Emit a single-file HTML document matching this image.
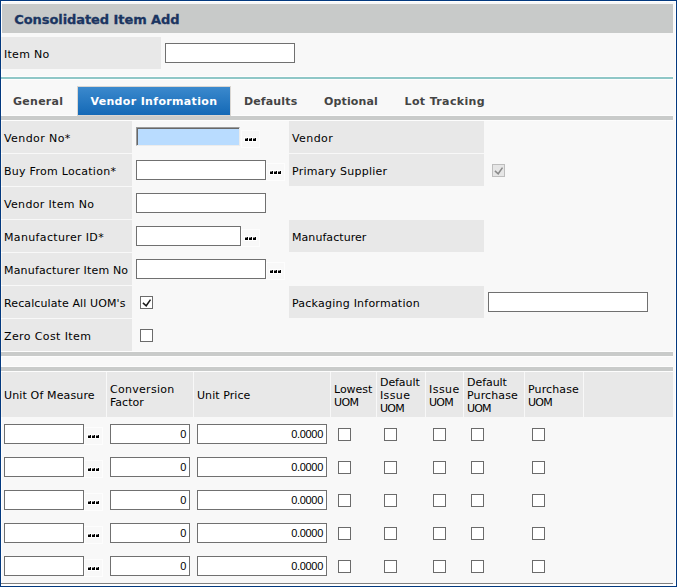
<!DOCTYPE html>
<html><head><meta charset="utf-8"><title>Consolidated Item Add</title>
<style>
html,body{margin:0;padding:0;}
body{width:677px;height:587px;overflow:hidden;background:#f8f8f8;position:relative;font-family:"DejaVu Sans","Liberation Sans",sans-serif;font-size:11px;color:#000;}
div,span{position:absolute;box-sizing:border-box;}
.frame{left:0;top:0;width:677px;height:587px;border:1px solid #03397f;}
.frame2{left:1px;top:1px;width:675px;height:585px;border:1px solid #fff;border-bottom-width:2px;}
.hdr{left:2px;top:4px;width:671px;height:29px;background:#c8cac9;}
.title{left:14.3px;top:12px;font-size:13px;font-weight:bold;color:#1b3561;white-space:nowrap;line-height:16px;-webkit-text-stroke:0.3px #1b3561;}
.lab{background:#e8e8e8;}
.ll{box-shadow:-1px 0 0 #f6f3ef;}
.t{white-space:nowrap;line-height:14px;}
.inp{background:#fff;border:1px solid #707070;}
.bar{background:#c9cbca;box-shadow:0 -1px 0 #fdfdfd,0 1px 0 #fdfdfd;}
.tab{font-weight:bold;color:#444;white-space:nowrap;line-height:14px;top:95px;}
.dots{width:19px;height:18px;border:1px solid #fdfdfd;}
.dots b{position:absolute;left:2px;top:6px;width:13px;height:5px;background:#fff;}
.dots i{position:absolute;top:7px;width:3px;height:3px;background:#000;}
.dots i:after{content:"";position:absolute;left:0;top:0;width:2px;height:1px;background:#8a8a8a;}
.cb{width:13px;height:13px;border:1px solid #6b6b6b;background:#fff;}
.num{text-align:right;line-height:18px;padding-right:3px;color:#000;font-family:"Liberation Sans",sans-serif;font-size:11px;letter-spacing:-0.3px;}
.hc{background:#e8e8e8;top:372px;height:45px;}
.hc span{left:3px;line-height:13px;white-space:nowrap;}
</style></head><body>
<div class="frame"></div><div class="frame2"></div>
<div class="hdr"></div><span class="title" id="title" style="letter-spacing:-0.08px">Consolidated Item Add</span>
<div class="lab ll" style="left:2px;top:37px;width:159px;height:32px"></div><span class="t" id="itemno" style="letter-spacing:0.28px;left:4px;top:48px">Item No</span>
<div class="inp" style="left:165px;top:43px;width:130px;height:20px"></div>
<div style="left:1px;top:77px;width:672px;height:2px;background:#8fc7c7;box-shadow:0 -1px 0 #fdfdfd,0 1px 0 #fdfdfd"></div>
<span class="tab" id="tab1" style="letter-spacing:0.27px;left:13px">General</span>
<div id="acttab" style="z-index:2;left:77px;top:86px;width:154px;height:30px;border:1px solid #d9d6d2;background:linear-gradient(#3b89cd,#1469b6)"></div>
<span class="tab" id="tab2" style="letter-spacing:0.34px;z-index:3;left:90.4px;color:#fff">Vendor Information</span>
<span class="tab" id="tab3" style="letter-spacing:0.14px;left:244px">Defaults</span>
<span class="tab" id="tab4" style="letter-spacing:0.14px;left:324px">Optional</span>
<span class="tab" id="tab5" style="letter-spacing:0.37px;left:404.5px">Lot Tracking</span>
<div class="bar" style="left:1px;top:116px;width:672px;height:4px"></div>

<div class="lab ll" style="left:2px;top:121px;width:130px;height:32px"></div><span class="t" id="l0" style="letter-spacing:0.41px;left:4px;top:132px">Vendor No*</span>
<div class="lab" style="left:289px;top:121px;width:195px;height:32px"></div><span class="t" id="r0" style="letter-spacing:0.42px;left:292px;top:132px">Vendor</span>
<div class="lab ll" style="left:2px;top:154px;width:130px;height:32px"></div><span class="t" id="l1" style="letter-spacing:0.27px;left:4px;top:165px">Buy From Location*</span>
<div class="lab" style="left:289px;top:154px;width:195px;height:32px"></div><span class="t" id="r1" style="letter-spacing:0.25px;left:292px;top:165px">Primary Supplier</span>
<div class="lab ll" style="left:2px;top:187px;width:130px;height:32px"></div><span class="t" id="l2" style="letter-spacing:0.33px;left:4px;top:198px">Vendor Item No</span>
<div class="lab ll" style="left:2px;top:220px;width:130px;height:32px"></div><span class="t" id="l3" style="letter-spacing:0.35px;left:4px;top:231px">Manufacturer ID*</span>
<div class="lab" style="left:289px;top:220px;width:195px;height:32px"></div><span class="t" id="r3" style="letter-spacing:0.06px;left:292px;top:231px">Manufacturer</span>
<div class="lab ll" style="left:2px;top:253px;width:130px;height:32px"></div><span class="t" id="l4" style="letter-spacing:0.18px;left:4px;top:264px">Manufacturer Item No</span>
<div class="lab ll" style="left:2px;top:286px;width:130px;height:32px"></div><span class="t" id="l5" style="letter-spacing:0.11px;left:4px;top:297px">Recalculate All UOM's</span>
<div class="lab" style="left:289px;top:286px;width:195px;height:32px"></div><span class="t" id="r5" style="letter-spacing:0.23px;left:292px;top:297px">Packaging Information</span>
<div class="lab ll" style="left:2px;top:319px;width:130px;height:32px"></div><span class="t" id="l6" style="letter-spacing:0.39px;left:4px;top:330px">Zero Cost Item</span>
<div style="left:136px;top:127px;width:104px;height:19px;background:#b9dcff;border:1px solid;border-color:#9c9c9c #ececec #ececec #9c9c9c;box-shadow:inset 1px 1px 0 #686868"></div>
<div class="dots" style="left:241px;top:130px"><b></b><i style="left:3px"></i><i style="left:7px"></i><i style="left:11px"></i></div>
<div class="inp" style="left:136px;top:160px;width:130px;height:20px"></div>
<div class="dots" style="left:266px;top:163px"><b></b><i style="left:3px"></i><i style="left:7px"></i><i style="left:11px"></i></div>
<div class="inp" style="left:136px;top:193px;width:130px;height:20px"></div>
<div class="inp" style="left:136px;top:226px;width:105px;height:20px"></div>
<div class="dots" style="left:241px;top:229px"><b></b><i style="left:3px"></i><i style="left:7px"></i><i style="left:11px"></i></div>
<div class="inp" style="left:136px;top:259px;width:130px;height:20px"></div>
<div class="dots" style="left:266px;top:262px"><b></b><i style="left:3px"></i><i style="left:7px"></i><i style="left:11px"></i></div>
<div class="cb" style="left:140px;top:296px"><svg width="11" height="11" viewBox="0 0 11 11" style="position:absolute;left:0;top:0"><path d="M1.9 5.9 L5.2 8.8 L9.5 2.6" fill="none" stroke="#1a1a1a" stroke-width="1.5"/></svg></div>
<div class="cb" style="left:140px;top:329px"></div>
<div class="cb" style="left:492px;top:164px;border-color:#bdbdbd;background:#e6e6e6"><svg width="11" height="11" viewBox="0 0 11 11" style="position:absolute;left:0;top:0"><path d="M1.9 5.9 L5.2 8.8 L9.5 2.6" fill="none" stroke="#8a8a8a" stroke-width="1.5"/></svg></div>
<div class="inp" style="left:488px;top:292px;width:160px;height:20px"></div>
<div class="bar" style="left:1px;top:352px;width:672px;height:4px"></div>
<div class="bar" style="left:1px;top:367px;width:672px;height:4px"></div>
<div class="hc ll" style="left:2px;width:104px"><span id="h0_0" style="letter-spacing:0.14px;top:17.0px;left:2px">Unit Of Measure</span></div>
<div class="hc" style="left:107px;width:86px"><span id="h1_0" style="letter-spacing:0.29px;top:10.5px">Conversion</span><span id="h1_1" style="letter-spacing:0.02px;top:23.5px">Factor</span></div>
<div class="hc" style="left:194px;width:136px"><span id="h2_0" style="letter-spacing:0.06px;top:17.0px">Unit Price</span></div>
<div class="hc" style="left:331px;width:45px"><span id="h3_0" style="letter-spacing:-0.04px;top:10.5px">Lowest</span><span id="h3_1" style="letter-spacing:-0.6px;top:23.5px">UOM</span></div>
<div class="hc" style="left:377px;width:48px"><span id="h4_0" style="letter-spacing:-0.08px;top:4.0px">Default</span><span id="h4_1" style="letter-spacing:0.38px;top:17.0px">Issue</span><span id="h4_2" style="letter-spacing:-0.7px;top:30.0px">UOM</span></div>
<div class="hc" style="left:426px;width:37px"><span id="h5_0" style="letter-spacing:0.47px;top:10.5px">Issue</span><span id="h5_1" style="letter-spacing:-0.7px;top:23.5px">UOM</span></div>
<div class="hc" style="left:464px;width:60px"><span id="h6_0" style="letter-spacing:-0.05px;top:4.0px">Default</span><span id="h6_1" style="letter-spacing:0.13px;top:17.0px">Purchase</span><span id="h6_2" style="letter-spacing:-0.9px;top:30.0px">UOM</span></div>
<div class="hc" style="left:525px;width:58px"><span id="h7_0" style="letter-spacing:0.13px;top:10.5px">Purchase</span><span id="h7_1" style="letter-spacing:-0.7px;top:23.5px">UOM</span></div>
<div class="hc" style="left:584px;width:89px"></div>
<div class="inp" style="left:4px;top:424px;width:80px;height:20px"></div>
<div class="dots" style="left:84px;top:427px"><b></b><i style="left:3px"></i><i style="left:7px"></i><i style="left:11px"></i></div>
<div class="inp num" style="left:110px;top:424px;width:80px;height:20px">0</div>
<div class="inp num" style="left:197px;top:424px;width:130px;height:20px">0.0000</div>
<div class="cb" style="left:338px;top:428px"></div>
<div class="cb" style="left:384px;top:428px"></div>
<div class="cb" style="left:433px;top:428px"></div>
<div class="cb" style="left:471px;top:428px"></div>
<div class="cb" style="left:532px;top:428px"></div>
<div class="inp" style="left:4px;top:457px;width:80px;height:20px"></div>
<div class="dots" style="left:84px;top:460px"><b></b><i style="left:3px"></i><i style="left:7px"></i><i style="left:11px"></i></div>
<div class="inp num" style="left:110px;top:457px;width:80px;height:20px">0</div>
<div class="inp num" style="left:197px;top:457px;width:130px;height:20px">0.0000</div>
<div class="cb" style="left:338px;top:461px"></div>
<div class="cb" style="left:384px;top:461px"></div>
<div class="cb" style="left:433px;top:461px"></div>
<div class="cb" style="left:471px;top:461px"></div>
<div class="cb" style="left:532px;top:461px"></div>
<div class="inp" style="left:4px;top:490px;width:80px;height:20px"></div>
<div class="dots" style="left:84px;top:493px"><b></b><i style="left:3px"></i><i style="left:7px"></i><i style="left:11px"></i></div>
<div class="inp num" style="left:110px;top:490px;width:80px;height:20px">0</div>
<div class="inp num" style="left:197px;top:490px;width:130px;height:20px">0.0000</div>
<div class="cb" style="left:338px;top:494px"></div>
<div class="cb" style="left:384px;top:494px"></div>
<div class="cb" style="left:433px;top:494px"></div>
<div class="cb" style="left:471px;top:494px"></div>
<div class="cb" style="left:532px;top:494px"></div>
<div class="inp" style="left:4px;top:523px;width:80px;height:20px"></div>
<div class="dots" style="left:84px;top:526px"><b></b><i style="left:3px"></i><i style="left:7px"></i><i style="left:11px"></i></div>
<div class="inp num" style="left:110px;top:523px;width:80px;height:20px">0</div>
<div class="inp num" style="left:197px;top:523px;width:130px;height:20px">0.0000</div>
<div class="cb" style="left:338px;top:527px"></div>
<div class="cb" style="left:384px;top:527px"></div>
<div class="cb" style="left:433px;top:527px"></div>
<div class="cb" style="left:471px;top:527px"></div>
<div class="cb" style="left:532px;top:527px"></div>
<div class="inp" style="left:4px;top:556px;width:80px;height:20px"></div>
<div class="dots" style="left:84px;top:559px"><b></b><i style="left:3px"></i><i style="left:7px"></i><i style="left:11px"></i></div>
<div class="inp num" style="left:110px;top:556px;width:80px;height:20px">0</div>
<div class="inp num" style="left:197px;top:556px;width:130px;height:20px">0.0000</div>
<div class="cb" style="left:338px;top:560px"></div>
<div class="cb" style="left:384px;top:560px"></div>
<div class="cb" style="left:433px;top:560px"></div>
<div class="cb" style="left:471px;top:560px"></div>
<div class="cb" style="left:532px;top:560px"></div>
<div style="left:1px;top:583px;width:672px;height:1px;background:#808080"></div>
</body></html>
